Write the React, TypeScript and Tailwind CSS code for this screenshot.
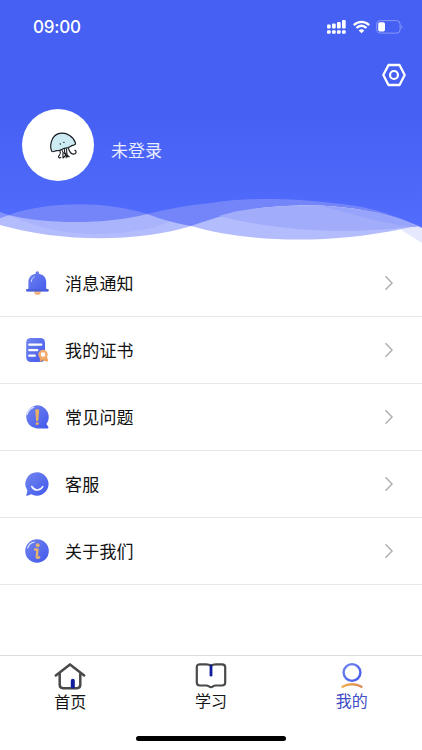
import type { ReactNode } from 'react';

interface MenuItem {
  label: string;
  icon: ReactNode;
}

function Gradients() {
  return (
    <svg className="absolute size-0" aria-hidden="true">
      <defs>
        <linearGradient id="blue" x1="0" y1="0" x2="1" y2="1">
          <stop offset="0" stopColor="#7286ee" />
          <stop offset="1" stopColor="#4258ec" />
        </linearGradient>
        <linearGradient id="orange" x1="0" y1="0" x2="1" y2="0">
          <stop offset="0" stopColor="#edb14e" />
          <stop offset="1" stopColor="#d88656" />
        </linearGradient>
      </defs>
    </svg>
  );
}

function BellIcon() {
  return (
    <svg className="size-7" viewBox="0 0 28 28">
      <circle cx="14.5" cy="22.7" r="3.3" fill="#f0b581" />
      <path
        d="M14.3 2.2c1 0 1.6.8 1.6 1.7v.9c4.5.8 7.3 4 7.3 8v6.9l1.6.6c.6.2.8.7.8 1.2s-.5 1-1.2 1H4.3c-.7 0-1.2-.5-1.2-1s.3-1 .8-1.2l1.5-.6v-6.9c0-4 2.8-7.2 7.3-8v-.9c0-.9.7-1.7 1.6-1.7z"
        fill="url(#blue)"
      />
      <path d="M8.4 12.5c.1-2.3 1-3.7 2.8-4.6" fill="none" stroke="#d8dfff" strokeWidth="1" strokeLinecap="round" />
      <path d="M4 21.3h20.7" stroke="#4b60d6" strokeWidth="2" strokeLinecap="round" />
    </svg>
  );
}

function CertificateIcon() {
  return (
    <svg className="size-7" viewBox="0 0 28 28">
      <rect x="3.2" y="2" width="18.8" height="24" rx="4.5" fill="url(#blue)" />
      <path d="M6.3 8.7h12M6.3 14.2h8M6.3 19.7h5.5" stroke="#fff" strokeWidth="2.3" strokeLinecap="round" />
      <path d="M16.8 20.5v5.5l3.2-1.7 4.2 1.4 1-1-1.5-5z" fill="#f1a261" />
      <circle cx="20" cy="18.5" r="3.5" fill="#fff" stroke="#f1ab70" strokeWidth="2.5" />
    </svg>
  );
}

function QuestionIcon() {
  return (
    <svg className="size-7" viewBox="0 0 28 28">
      <path
        d="M13.8 2.2a11.9 11.9 0 0 1 11.9 11.9c0 2.7-.8 4.8-2.3 6.8l1.8 2.9c.6 1 .2 1.7-.8 1.7H13.8a11.7 11.7 0 0 1 0-23.3z"
        fill="url(#blue)"
      />
      <path d="M4.1 11.5c.9-3.7 3.1-6 6.5-7.1" fill="none" stroke="#e1e6ff" strokeWidth="1.2" strokeLinecap="round" />
      <path d="M12.3 7.8c0-1.1.8-1.8 1.9-1.8s2 .8 1.9 1.8l-.7 9.1c-.1.8-.5 1.3-1.2 1.3s-1.1-.5-1.2-1.3z" fill="#e7ae68" />
      <circle cx="14.2" cy="20.5" r="1.6" fill="#dfaa75" />
    </svg>
  );
}

function ServiceIcon() {
  return (
    <svg className="size-7" viewBox="0 0 28 28">
      <path
        d="M14 2.3a11.7 11.7 0 1 1-5.7 22l-3.9 1.5c-.8.3-1.3-.3-1-1.1l1-4.1A11.7 11.7 0 0 1 14 2.3z"
        fill="url(#blue)"
      />
      <path d="M8.8 16.5c2.5 4.6 8.3 4.7 11 .2" fill="none" stroke="#f5f7ff" strokeWidth="1.6" strokeLinecap="round" />
    </svg>
  );
}

function InfoIcon() {
  return (
    <svg className="size-7" viewBox="0 0 28 28">
      <circle cx="14" cy="14" r="11.8" fill="url(#blue)" />
      <path d="M4.7 11c1.1-3.4 3.3-5.4 6.6-6" fill="none" stroke="#e1e6ff" strokeWidth="1.2" strokeLinecap="round" />
      <circle cx="14.7" cy="8.2" r="2" fill="#e6b074" />
      <path d="M12 12.5h2.5l-.8 7.6c0 1 1 1.1 2.5.1" fill="none" stroke="#e6b074" strokeWidth="2.4" strokeLinecap="round" strokeLinejoin="round" />
    </svg>
  );
}

function Jellyfish() {
  return (
    <svg className="size-[30px]" viewBox="0 0 30 30" fill="none" strokeLinecap="round" strokeLinejoin="round">
      <path
        d="M3.8 20.3C1.5 15.5 2.7 4.5 11.5 2.4c7.8-1.3 14 3.5 15.9 9.3.4 1.5-.4 2.2-1.9 2.5-2 .3-3.4 1.5-5.3 2.4-1.8.7-3.3.3-5 1.2-2.3 1.2-3.7 2.2-6.3 1.9-1.7-.2-4.3 2-5.1.6z"
        fill="#cdebf3"
        stroke="#171b20"
        strokeWidth="1.2"
      />
      <path
        d="M12 20c1.4 3-.2 3.5-1.3 5.2-.8 1.4 1 2.2 2.2 1.2M14.2 19.5c2.3 2.6-.6 5.5 1.3 7.2M16.5 18.5c-.8 4.5 3.6 5 1.6 8.2M18.5 18c.8 3.7-1.2 5.6 2.7 7.7M20.5 17.5c1 3.4 1.8 5.4 4.7 5.6 3.2.2 3.9-3.3 1.6-3.7M16 22l3.7 4M18 24l-3 3"
        stroke="#171b20"
        strokeWidth="1.1"
      />
      <circle cx="12.3" cy="13" r=".7" fill="#171b20" />
      <circle cx="15.9" cy="11.4" r=".7" fill="#171b20" />
    </svg>
  );
}

function Waves() {
  return (
    <svg className="absolute inset-0 h-[250px] w-full" viewBox="0 0 422 250" preserveAspectRatio="none">
      <defs>
        <linearGradient id="sky" x1="0" y1="0" x2="0" y2="1">
          <stop offset="0" stopColor="#4560f3" />
          <stop offset=".5" stopColor="#4560f3" />
          <stop offset="1" stopColor="#526cfc" />
        </linearGradient>
      </defs>
      <path d="M385 220C400 228 410 236 422 243V224z" fill="#e6e9fe" />
      {/* pale foam along the bottom */}
      <path d="M0 210V225C60 242 135 243 191 226C250 243 330 244 402 229L422 225V210z" fill="#b3bcfd" />
      <path d="M9 215C60 240 115 235 147 229C165 225 175 219 185 210z" fill="#a9b4fc" />
      {/* deeper water */}
      <path d="M0 190H422V228C390 213 350 205.5 308 205.5C250 205.5 225 215 191 226Q168 222 147 214C105 225 45 224 8 215L0 218z" fill="#7485f9" />
      <path d="M0 212L9 215L0 218z" fill="#8391fa" />
      {/* right swell */}
      <path d="M219 216C245 208 275 205.5 308 205.5C350 205.5 390 213 418 226C360 234 285 233 219 216z" fill="#a1acfa" />
      <path d="M320 206C355 207 390 214 418 227C390 226 355 214 320 206z" fill="#97a4fb" />
      <path
        d="M0 0H422V227C400 218 382 211 362 207C345 204 325 202 300 200C265 198 235 199 211 203Q179 206 147 214C105 201 48 201 9 215L0 212z"
        fill="url(#sky)"
      />
    </svg>
  );
}

function StatusBar() {
  return (
    <div className="flex h-[54px] items-center justify-between pr-[19px] pl-[33px] text-white">
      <span className="font-['Inter'] text-[17px] leading-none font-medium tracking-[-0.2px]">09:00</span>
      <div className="flex items-center gap-[6px]">
        <svg width="20" height="14" viewBox="0 0 20 14" fill="#fff">
          <rect x="0" y="4.5" width="3.7" height="4" rx="1" />
          <rect x="5" y="3.5" width="3.7" height="5" rx="1" />
          <rect x="10" y="2" width="3.7" height="6.5" rx="1" />
          <rect x="15" y="0" width="3.7" height="8.5" rx="1" />
          {[0, 5, 10, 15].map((x) => (
            <rect key={x} x={x} y="10.2" width="3.7" height="3.6" rx="1" />
          ))}
        </svg>
        <svg width="17" height="14" viewBox="0 0 17 14" fill="none" stroke="#fff" strokeWidth="2.3">
          <path d="M.8 5.1c4.3-4.4 11.1-4.4 15.4 0M3.5 8c2.9-3 7.1-3 10 0" />
          <path d="M8.5 13.2 5.7 10.4c1.6-1.5 4-1.5 5.6 0z" fill="#fff" stroke="none" />
        </svg>
        <svg width="27" height="14" viewBox="0 0 27 14">
          <rect x=".6" y=".6" width="23.5" height="12.5" rx="3.5" fill="none" stroke="#8999f8" strokeWidth="1" />
          <rect x="2.2" y="2.2" width="6.8" height="9.3" rx="1.7" fill="#fff" />
          <path d="M25.5 5v4c1.2-.6 1.2-3.4 0-4z" fill="#8999f8" />
        </svg>
      </div>
    </div>
  );
}

function Header() {
  return (
    <header className="relative h-[250px]">
      <Waves />
      <div className="relative">
        <StatusBar />
        <div className="flex justify-end pt-2 pr-4">
          <svg width="24" height="26" viewBox="0 0 24 26" fill="none" stroke="#fff">
            <path d="M6.5 3h11L22.7 13l-5.2 10h-11L1.3 13z" strokeWidth="2.3" strokeLinejoin="round" />
            <circle cx="12" cy="13" r="4" strokeWidth="2.2" />
          </svg>
        </div>
        <div className="flex pt-[21px] pl-[22px]">
          <div className="flex size-[72px] items-center justify-center rounded-full bg-white pt-0.5 pl-2.5">
            <Jellyfish />
          </div>
          <span className="mt-[31px] ml-[17px] text-[17px] leading-6 text-[#e9edff]">未登录</span>
        </div>
      </div>
    </header>
  );
}

const menuItems: MenuItem[] = [
  { label: '消息通知', icon: <BellIcon /> },
  { label: '我的证书', icon: <CertificateIcon /> },
  { label: '常见问题', icon: <QuestionIcon /> },
  { label: '客服', icon: <ServiceIcon /> },
  { label: '关于我们', icon: <InfoIcon /> },
];

function MenuRow({ label, icon }: MenuItem) {
  return (
    <li className="flex h-[67.1px] items-center border-b border-[#e8e8ea] pr-7 pl-[23px]">
      {icon}
      <span className="ml-[14px] pt-[3px] text-[17px] leading-6 tracking-[0.2px] text-[#111]">{label}</span>
      <svg className="ml-auto" width="10" height="16" viewBox="0 0 10 16" fill="none">
        <path d="M1.5 1.3 8 8l-6.5 6.7" stroke="#b0b0b0" strokeWidth="1.5" />
      </svg>
    </li>
  );
}

function TabBar() {
  return (
    <nav className="flex h-[72px] justify-around border-t border-[#dcdcdc] pt-[6px] text-base leading-6 text-[#151515]">
      <div className="flex flex-1 flex-col items-center">
        <svg width="32" height="28" viewBox="0 0 32 28" fill="none" stroke="#494949" strokeWidth="2.5" strokeLinecap="round" strokeLinejoin="round">
          <path d="M1.8 13.5 16 2.4l14.2 11.1M5.7 11.5v11.3c0 2.2 1.1 3.4 3.3 3.4h14c2.2 0 3.3-1.2 3.3-3.4V11.5" />
          <path d="M18.8 24.5v-5.8" stroke="#101d9d" strokeWidth="4" />
        </svg>
        <span className="mt-px">首页</span>
      </div>
      <div className="flex flex-1 flex-col items-center">
        <svg width="32" height="28" viewBox="0 0 32 28" fill="none" stroke="#494949" strokeWidth="2.2" strokeLinecap="round" strokeLinejoin="round">
          <path d="M16 3.6c-1.5-1.3-3-1.3-5-1.3H5c-2.1 0-3.2 1-3.2 3v15.2c0 2 1.1 3 3.2 3h6.5c2 0 2.8 1.7 4.5 1.7s2.5-1.7 4.5-1.7H27c2.1 0 3.2-1 3.2-3V5.3c0-2-1.1-3-3.2-3h-6c-2 0-3.5 0-5 1.3z" />
          <path d="M16 4.2v9" stroke="#101d9d" strokeWidth="2.8" />
        </svg>
        <span>学习</span>
      </div>
      <div className="flex flex-1 flex-col items-center text-[#414bc4]">
        <svg width="32" height="28" viewBox="0 0 32 28" fill="none">
          <circle cx="16" cy="10.5" r="8.4" stroke="url(#blue)" strokeWidth="2.4" />
          <path d="M6.5 24.7c5.5-3.2 13.5-3.2 19 0" stroke="url(#orange)" strokeWidth="2.4" strokeLinecap="round" />
        </svg>
        <span>我的</span>
      </div>
    </nav>
  );
}

export default function App() {
  return (
    <div className="relative flex h-[750px] w-[422px] flex-col overflow-hidden bg-white font-['Liberation_Sans','Noto_Sans_CJK_SC',sans-serif]">
      <Gradients />
      <Header />
      <ul className="flex-1">
        {menuItems.map((item) => (
          <MenuRow key={item.label} {...item} />
        ))}
      </ul>
      <TabBar />
      <footer className="flex h-[23px] justify-center pt-[9px]">
        <div className="h-[5px] w-[150px] rounded-full bg-black" />
      </footer>
    </div>
  );
}
